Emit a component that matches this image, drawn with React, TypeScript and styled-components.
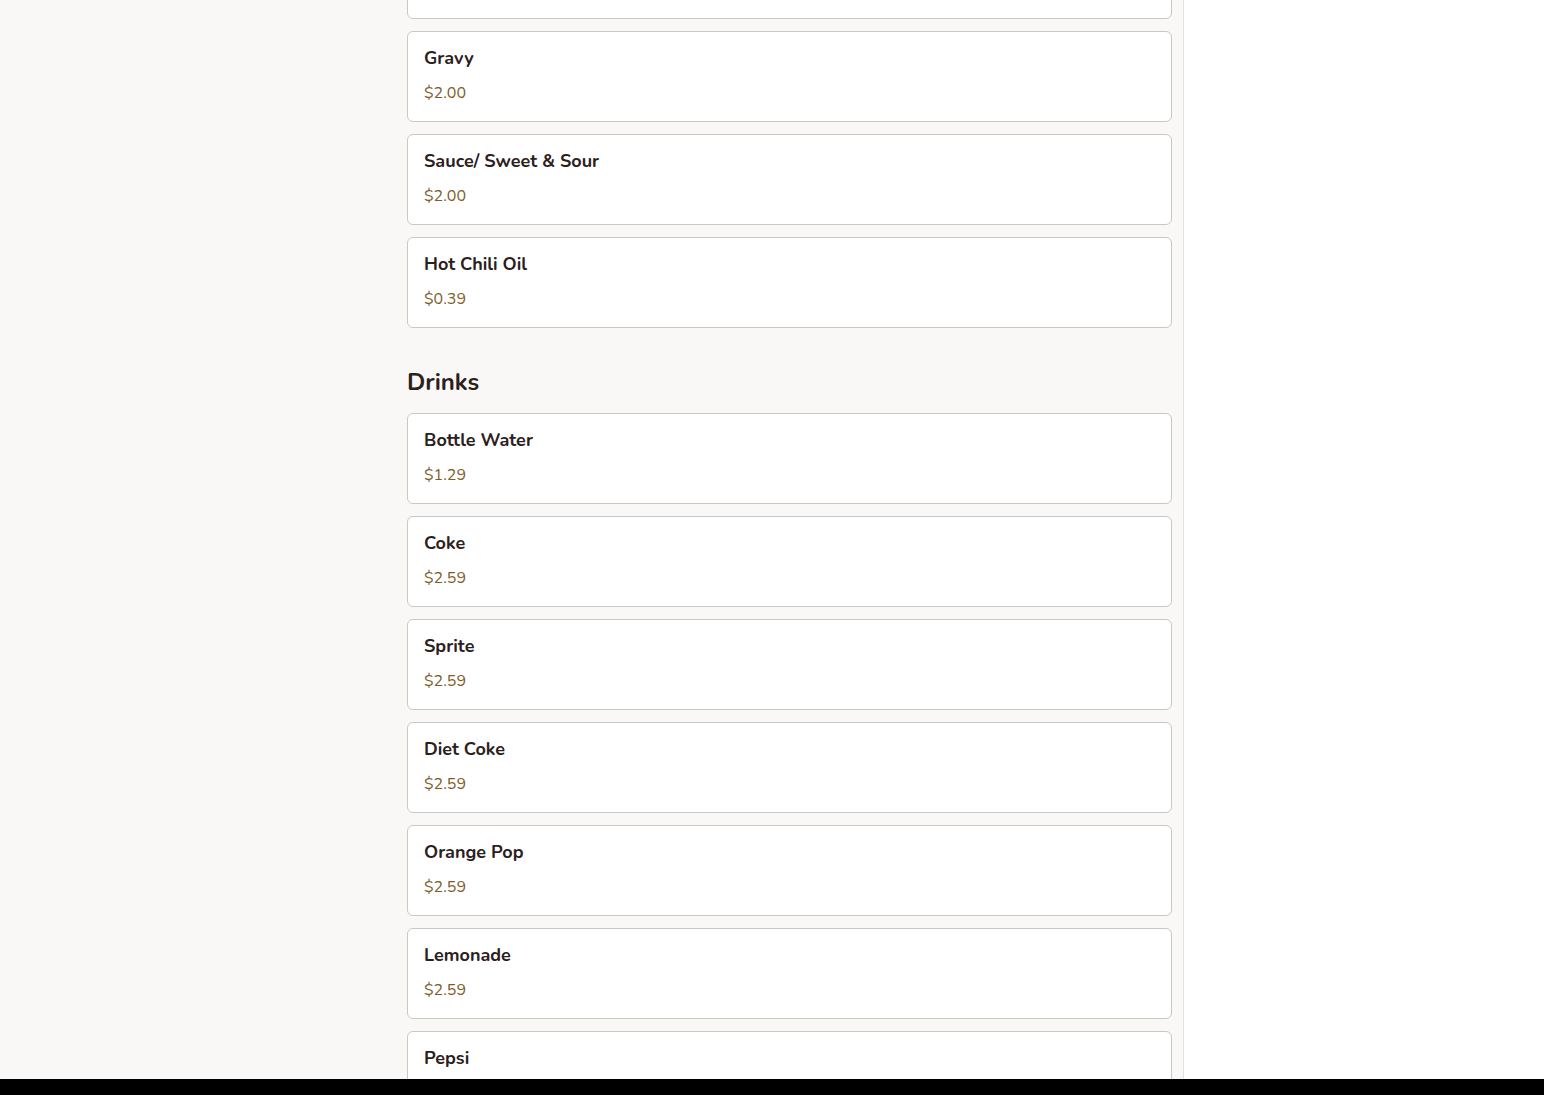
import * as React from "react";
import styled, { createGlobalStyle } from "styled-components";

type Item = { name: string; price: string };

const extras: Item[] = [
  { name: "Egg Roll", price: "$1.99" },
  { name: "Gravy", price: "$2.00" },
  { name: "Sauce/ Sweet & Sour", price: "$2.00" },
  { name: "Hot Chili Oil", price: "$0.39" },
];

const drinks: Item[] = [
  { name: "Bottle Water", price: "$1.29" },
  { name: "Coke", price: "$2.59" },
  { name: "Sprite", price: "$2.59" },
  { name: "Diet Coke", price: "$2.59" },
  { name: "Orange Pop", price: "$2.59" },
  { name: "Lemonade", price: "$2.59" },
  { name: "Pepsi", price: "$2.59" },
];

const App: React.FC = () => {
  return (
    <>
      <GlobalStyle />
      <Page>
        <Main>
          <Viewport>
            <Section $offset={-72}>
              <CardList>
                {extras.map((item) => (
                  <MenuCard key={item.name} item={item} />
                ))}
              </CardList>
            </Section>
            <Section>
              <SectionTitle>Drinks</SectionTitle>
              <CardList>
                {drinks.map((item) => (
                  <MenuCard key={item.name} item={item} />
                ))}
              </CardList>
            </Section>
          </Viewport>
        </Main>
        <Aside />
      </Page>
      <BottomBar />
    </>
  );
};

export default App;

const MenuCard: React.FC<{ item: Item }> = ({ item }) => {
  return (
    <Card>
      <ItemName>{item.name}</ItemName>
      <ItemPrice>{item.price}</ItemPrice>
    </Card>
  );
};

const GlobalStyle = createGlobalStyle`
  html, body {
    margin: 0;
    padding: 0;
    height: 100%;
    overflow: hidden;
  }
  body {
    font-family: "Nunito", "Lato", "Noto Sans", sans-serif;
    background: #ffffff;
  }
`;

const Page = styled.div`
  display: grid;
  grid-template-columns: 1184px 1fr;
  height: 1079px;
  overflow: hidden;
`;

const Main = styled.main`
  background: #faf8f6;
  border-right: 1px solid #e4e0dc;
  padding: 0 11px 0 407px;
  overflow: hidden;
`;

const Viewport = styled.div`
  display: flex;
  flex-direction: column;
  gap: 41px;
`;

const Section = styled.section<{ $offset?: number }>`
  display: flex;
  flex-direction: column;
  gap: 18px;
  margin-top: ${(p) => (p.$offset ? `${p.$offset}px` : "0")};
`;

const SectionTitle = styled.h2`
  margin: 0;
  font-size: 24px;
  font-weight: 700;
  line-height: 26px;
  color: #2b201b;
`;

const CardList = styled.div`
  display: flex;
  flex-direction: column;
  gap: 12px;
`;

const Card = styled.div`
  box-sizing: border-box;
  height: 91px;
  background: #ffffff;
  border: 1px solid #cbc7c3;
  border-radius: 6px;
  padding: 14px 16px;
  display: flex;
  flex-direction: column;
  gap: 12px;
`;

const ItemName = styled.div`
  font-size: 18px;
  font-weight: 700;
  line-height: 24px;
  color: #2b201b;
`;

const ItemPrice = styled.div`
  font-size: 16px;
  font-weight: 400;
  line-height: 22px;
  color: #7d5c2c;
`;

const Aside = styled.aside`
  background: #ffffff;
`;

const BottomBar = styled.div`
  height: 16px;
  background: #000000;
`;
